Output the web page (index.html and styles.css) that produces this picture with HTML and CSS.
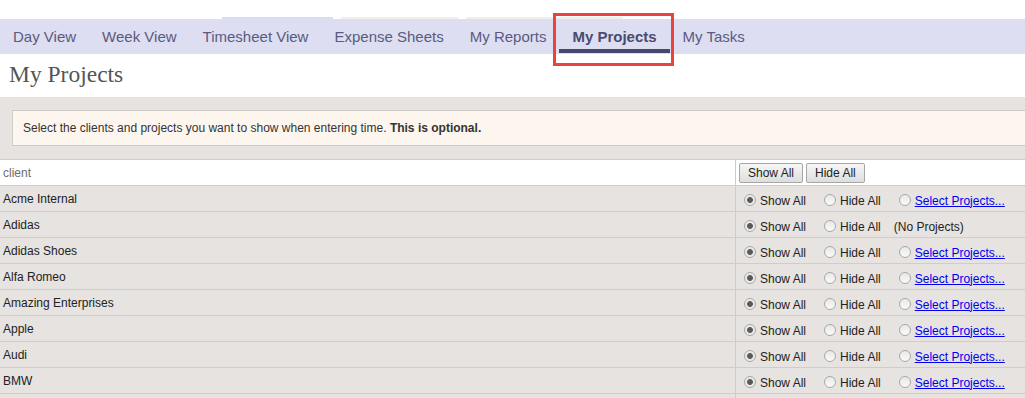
FILE: index.html
```html
<!DOCTYPE html>
<html lang="en">
<head>
  <meta charset="UTF-8">
  <title>My Projects</title>
  <link rel="stylesheet" href="styles.css">
</head>
<body>
  <div class="top-strips">
    <span class="strip strip-lav"></span>
    <span class="strip strip-gray"></span>
    <span class="strip strip-gray2"></span>
  </div>
  <nav class="tabs">
    <a class="tab">Day View</a>
    <a class="tab">Week View</a>
    <a class="tab">Timesheet View</a>
    <a class="tab">Expense Sheets</a>
    <a class="tab">My Reports</a>
    <a class="tab active">My Projects</a>
    <a class="tab">My Tasks</a>
  </nav>

  <h1 class="page-title">My Projects</h1>

  <div class="notice-band">
    <div class="notice">Select the clients and projects you want to show when entering time. <b>This is optional.</b></div>
  </div>

  <table class="clients">
    <thead>
      <tr>
        <th class="col-client">client</th>
        <th class="col-opts">
          <div class="opts">
            <button class="btn">Show All</button><button class="btn">Hide All</button>
          </div>
        </th>
      </tr>
    </thead>
    <tbody id="clientRows"></tbody>
  </table>

  <script>
    const clientes = [
      { nome: 'Acme Internal', projetos: true },
      { nome: 'Adidas', projetos: false },
      { nome: 'Adidas Shoes', projetos: true },
      { nome: 'Alfa Romeo', projetos: true },
      { nome: 'Amazing Enterprises', projetos: true },
      { nome: 'Apple', projetos: true },
      { nome: 'Audi', projetos: true },
      { nome: 'BMW', projetos: true }
    ];

    const corpo = document.getElementById('clientRows');
    clientes.forEach((c, i) => {
      const extra = c.projetos
        ? `<label class="opt"><input type="radio" name="c${i}"><a href="#">Select Projects...</a></label>`
        : `<span class="no-proj">(No Projects)</span>`;
      corpo.innerHTML += `<tr>
        <td class="col-client">${c.nome}</td>
        <td class="col-opts">
          <div class="opts">
            <label class="opt"><input type="radio" name="c${i}" checked>Show All</label>
            <label class="opt"><input type="radio" name="c${i}">Hide All</label>
            ${extra}
          </div>
        </td>
      </tr>`;
    });
    // linha seguinte, cortada pela borda da janela
    corpo.innerHTML += `<tr><td class="col-client"></td><td class="col-opts"><div class="opts"></div></td></tr>`;
  </script>
</body>
</html>
```

FILE: styles.css
```css
body {
  margin: 0;
  font-family: 'Liberation Sans', Arial, sans-serif;
  font-size: 12px;
  color: #222;
  background-color: #fff;
  overflow: hidden;
  height: 398px;
}
.top-strips {
  height: 19px;
  display: flex;
  align-items: flex-end;
}
.strip {
  height: 2px;
}
.strip-lav {
  width: 111px;
  margin-left: 222px;
  background-color: #dcdcf0;
}
.strip-gray {
  width: 117px;
  margin-left: 8px;
  background-color: #efefeb;
}
.strip-gray2 {
  width: 157px;
  margin-left: 8px;
  background-color: #efefeb;
}
.tabs {
  display: flex;
  height: 35px;
  background-color: #dddef2;
}
.tab {
  position: relative;
  display: flex;
  align-items: center;
  padding: 0 13px 1px 13px;
  font-size: 15px;
  color: #5a5b7e;
  text-decoration: none;
}
.tab.active {
  font-weight: bold;
  color: #4a4b70;
}
.tab.active::before {
  content: '';
  position: absolute;
  left: 0;
  right: 0;
  bottom: 1px;
  height: 4px;
  background-color: #45476f;
}
.tab.active::after {
  content: '';
  position: absolute;
  left: -6px;
  right: -4px;
  top: -6px;
  bottom: -12px;
  border: 3px solid #e8443d;
}
.page-title {
  margin: 0;
  height: 43px;
  padding: 7px 0 0 9px;
  box-sizing: border-box;
  font-family: 'Liberation Serif', 'Times New Roman', serif;
  font-weight: normal;
  font-size: 23.5px;
  color: #555;
}
.notice-band {
  background-color: #e6e3e0;
  padding: 13px 0 13px 12px;
}
.notice {
  height: 34px;
  line-height: 34px;
  margin-right: -10px;
  padding-left: 10px;
  border: 1px solid #cfccc8;
  background-color: #fdf6ee;
  color: #333;
}
.clients {
  width: 100%;
  border-collapse: collapse;
  border-top: 1px solid #cfccc9;
}
.clients th {
  font-weight: normal;
  text-align: left;
  background-color: #fff;
  height: 25px;
  padding: 0;
  border-bottom: 1px solid #cfccc9;
}
.clients th.col-client {
  color: #6e6e6e;
  padding-left: 3px;
}
.clients td {
  height: 24px;
  padding: 0;
  line-height: 14px;
  background-color: #e6e3e0;
  border-bottom: 1px solid #cfccc9;
}
.clients td.col-client {
  padding-left: 3px;
  padding-top: 1px;
}
.col-client {
  width: 732px;
}
.clients .col-opts {
  border-left: 1px solid #cfccc9;
  padding-left: 3px;
  white-space: nowrap;
}
.opts {
  display: flex;
  align-items: center;
  height: 24px;
}
.clients th .opts {
  height: 25px;
  margin-left: -1px;
}
.clients td .opts {
  padding-top: 4px;
  box-sizing: border-box;
}
.btn {
  font-family: 'Liberation Sans', Arial, sans-serif;
  font-size: 12px;
  height: 20px;
  padding: 0 8px;
  margin: 0 3px 0 1px;
  border: 1px solid #a6a6a6;
  border-radius: 2px;
  background: linear-gradient(#f6f6f6, #dedede);
  color: #222;
}
.btn + .btn {
  margin-left: 0;
}
.opt {
  display: inline-flex;
  align-items: center;
  margin-right: 13px;
}
.opt input {
  appearance: none;
  width: 12px;
  height: 12px;
  margin: 0 4px 0 5px;
  border: 1px solid #a8a8a8;
  border-radius: 50%;
  background: linear-gradient(#e8e8e8, #fafafa);
  box-sizing: border-box;
  position: relative;
  top: -1px;
}
.opt input:checked {
  background: radial-gradient(circle, #5a5a5a 0 2.5px, #b0b0b0 3px, #e8e8e8 3.5px, #f6f6f6 100%);
}
.opt a {
  color: #0000ee;
  text-decoration: underline;
}
```
